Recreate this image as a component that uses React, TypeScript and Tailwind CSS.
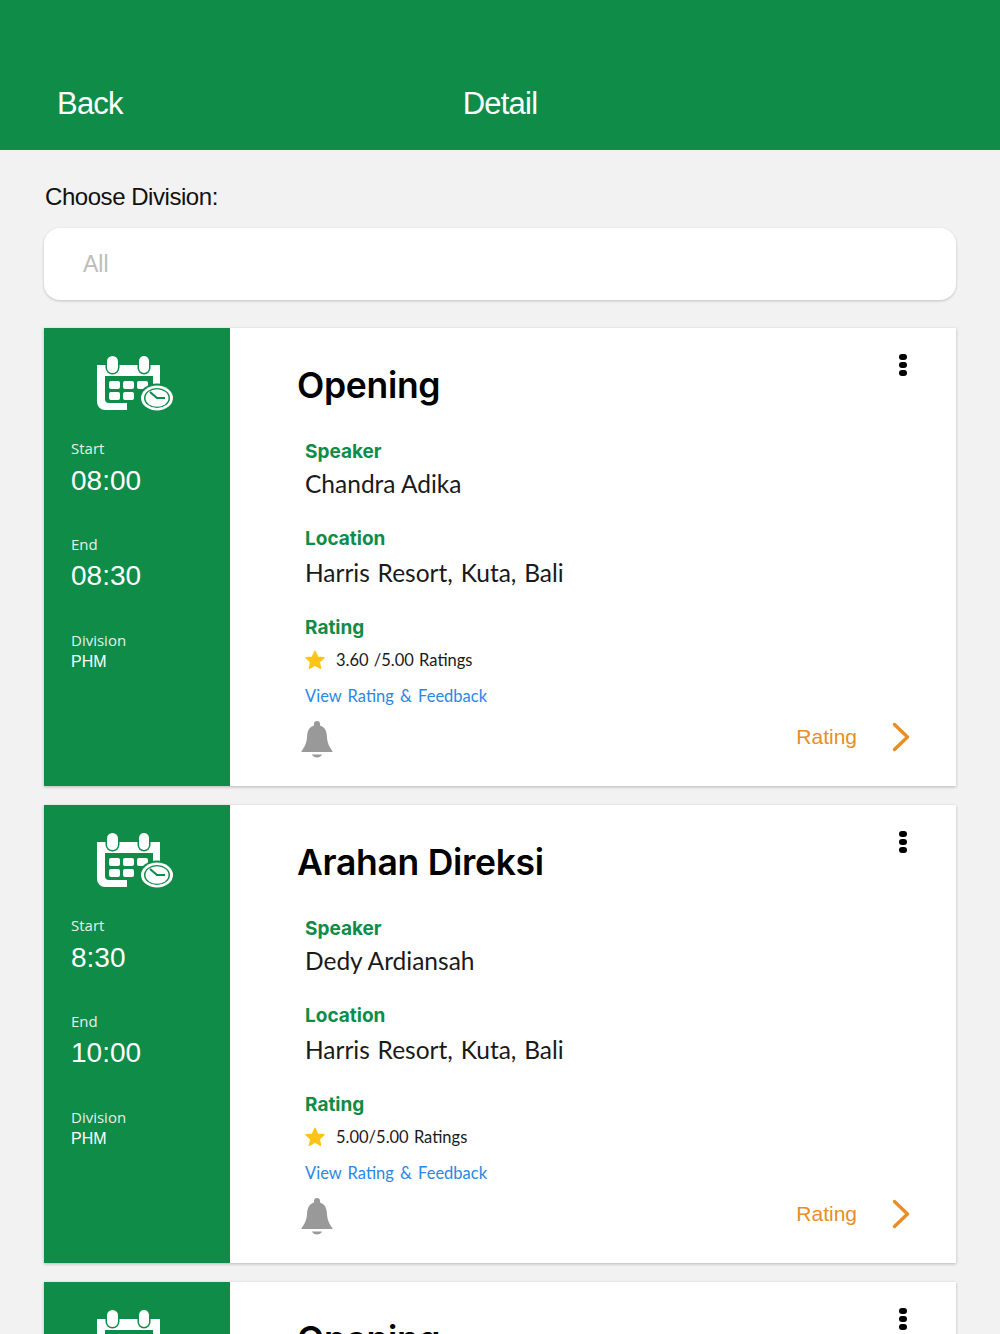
const sessions = [
  { title: "Opening", start: "08:00", end: "08:30", speaker: "Chandra Adika", rating: "3.60 /5.00" },
  { title: "Arahan Direksi", start: "8:30", end: "10:00", speaker: "Dedy Ardiansah", rating: "5.00/5.00" },
  { title: "Opening", start: "08:00", end: "08:30", speaker: "Chandra Adika", rating: "3.60 /5.00" },
];

const GREEN = "#0e8c48";

function CalendarIcon() {
  return (
    <svg width="78" height="56" viewBox="0 0 78 56" className="block">
      <path fill="#fff" d="M0 9h63v38H30v7H8a8 8 0 0 1-8-8z" />
      <path fill={GREEN} d="M8 20h48v27H12a4 4 0 0 1-4-4z" />
      <rect x="8.500" y="-2" width="14" height="20.500" rx="7" fill={GREEN} />
      <rect x="40.500" y="-2" width="13" height="20.500" rx="6.500" fill={GREEN} />
      <rect x="10" y="0" width="11" height="17" rx="5.500" fill="#fff" />
      <rect x="42" y="0" width="10" height="17" rx="5" fill="#fff" />
      <rect x="12" y="25" width="11" height="8" rx="2" fill="#fff" />
      <rect x="26" y="25" width="11" height="8" rx="2" fill="#fff" />
      <rect x="40" y="25" width="11" height="8" rx="2" fill="#fff" />
      <rect x="12" y="36" width="11" height="8" rx="2" fill="#fff" />
      <rect x="26" y="36" width="11" height="8" rx="2" fill="#fff" />
      <ellipse cx="60" cy="42" rx="18" ry="14.500" fill={GREEN} />
      <ellipse cx="60" cy="42" rx="16" ry="12.500" fill="#fff" />
      <ellipse cx="60" cy="42" rx="13" ry="10" fill={GREEN} />
      <ellipse cx="60" cy="42" rx="11.500" ry="8.700" fill="#fff" />
      <path d="M53 36l7 6h8" fill="none" stroke={GREEN} strokeWidth="2.200" />
    </svg>
  );
}

function Star() {
  return (
    <svg width="22" height="22" viewBox="0 0 24 24" className="block">
      <path
        fill="#fcc419"
        stroke="#fcc419"
        strokeWidth="1.5"
        strokeLinejoin="round"
        d="M12 2.500l2.900 6.300 6.900.8-5.100 4.700 1.400 6.800-6.100-3.400-6.100 3.400 1.400-6.800-5.100-4.700 6.900-.8z"
      />
    </svg>
  );
}

function Bell() {
  return (
    <svg width="32" height="38" viewBox="0 0 32 38" className="block">
      <path
        fill="#999"
        d="M13 4a3 3 0 0 1 6 0v1.600c4.600 1.400 6.600 5.400 6.900 10.400.4 7 2.200 10.500 5.600 15.200.3.500 0 .8-.5.8H1c-.5 0-.8-.3-.5-.8C3.900 26.500 5.700 23 6.100 16c.3-5 2.300-9 6.900-10.400z"
      />
      <path fill="#999" d="M11 34.500h10c-.8 2-2.800 3-5 3s-4.200-1-5-3z" />
    </svg>
  );
}

function Card({ s }: { s: (typeof sessions)[number] }) {
  return (
    <div className="flex h-[458px] shrink-0 bg-white shadow-[0_1px_3px_rgba(0,0,0,0.25)]">
      <div className="flex w-[186px] shrink-0 flex-col bg-[#0e8c48] pl-[27px] pt-[28px] text-white">
        <div className="ml-[26px]">
          <CalendarIcon />
        </div>
        <div className="mt-[27px] text-[15px] leading-[18px] font-['Open_Sans',sans-serif] text-[#e4f2ea]">Start</div>
        <div className="mt-[7px] text-[28px] leading-[34px] font-['Liberation_Sans',sans-serif]">{s.start}</div>
        <div className="mt-[37px] text-[15px] leading-[18px] font-['Open_Sans',sans-serif] text-[#e4f2ea]">End</div>
        <div className="mt-[6px] text-[28px] leading-[34px] font-['Liberation_Sans',sans-serif]">{s.end}</div>
        <div className="mt-[38px] text-[15px] leading-[18px] font-['Open_Sans',sans-serif] text-[#e4f2ea]">Division</div>
        <div className="mt-[3px] text-[16px] leading-[20px] font-['Liberation_Sans',sans-serif]">PHM</div>
      </div>

      <div className="flex min-w-0 flex-1 flex-col pl-[68px] pr-[46px]">
        <div className="flex items-start justify-between pt-[36px]">
          <h2 className="-ml-[1px] text-[35.5px] leading-[44px] font-semibold text-black font-['Inter',sans-serif] tracking-[-0.3px]">
            {s.title}
          </h2>
          <div className="-mt-[10px] mr-[3px] flex flex-col gap-[2px]">
            <span className="h-[6px] w-[8px] rounded-full bg-black" />
            <span className="h-[6px] w-[8px] rounded-full bg-black" />
            <span className="h-[6px] w-[8px] rounded-full bg-black" />
          </div>
        </div>

        <div className="pl-[7px]">
          <div className="mt-[32px] text-[19px] leading-[24px] font-bold text-[#0e8c48] font-['Inter',sans-serif]">Speaker</div>
          <div className="mt-[4px] text-[24.5px] leading-[32px] text-[#1a1a1a] font-['Lato',sans-serif]">{s.speaker}</div>
          <div className="mt-[27px] text-[19px] leading-[24px] font-bold text-[#0e8c48] font-['Inter',sans-serif]">Location</div>
          <div className="mt-[6px] text-[24.5px] leading-[32px] text-[#1a1a1a] font-['Lato',sans-serif] [word-spacing:1.5px]">Harris Resort, Kuta, Bali</div>
          <div className="mt-[27px] text-[19px] leading-[24px] font-bold text-[#0e8c48] font-['Inter',sans-serif]">Rating</div>
          <div className="mt-[8px] flex h-[24px] items-center gap-[10px] -ml-[1px] text-[16.5px] text-[#1a1a1a] font-['Lato',sans-serif]">
            <Star />
            <span className="[word-spacing:1px]">{s.rating} Ratings</span>
          </div>
          <div className="mt-[12px] text-[16.5px] leading-[24px] text-[#2b87e3] font-['Lato',sans-serif] [word-spacing:2px]">View Rating &amp; Feedback</div>
        </div>

        <div className="mt-[12px] flex items-center justify-between pl-[3px]">
          <Bell />
          <div className="flex items-center gap-[35px] -mt-[4px]">
            <span className="text-[21px] leading-[28px] text-[#e98e24] font-['Liberation_Sans',sans-serif]">Rating</span>
            <svg width="18" height="30" viewBox="0 0 18 30" className="block">
              <path d="M2.500 2.500L15.500 15 2.500 27.500" fill="none" stroke="#e98e24" strokeWidth="3.400" strokeLinecap="round" strokeLinejoin="round" />
            </svg>
          </div>
        </div>
      </div>
    </div>
  );
}

export default function App() {
  return (
    <div className="flex h-[1334px] flex-col overflow-hidden bg-[#f2f2f2] font-['Liberation_Sans',sans-serif]">
      <header className="flex h-[150px] shrink-0 items-end bg-[#0e8c48] pb-[26px] text-white">
        <div className="relative flex w-full justify-center">
          <span className="absolute left-[57px] text-[31px] leading-[40px] tracking-[-0.8px]">Back</span>
          <span className="text-[31px] leading-[40px] tracking-[-0.8px]">Detail</span>
        </div>
      </header>

      <main className="flex flex-col px-[44px]">
        <div className="mt-[32px] pl-[1px] text-[24px] leading-[30px] tracking-[-0.45px] text-[#111]">Choose Division:</div>
        <div className="mt-[16px] flex h-[72px] items-center rounded-[16px] bg-white pl-[39px] text-[23px] text-[#bdbdbd] shadow-[0_1px_3px_rgba(0,0,0,0.2)]">
          All
        </div>
        <div className="mt-[28px] flex flex-col gap-[19px]">
          {sessions.map((s, i) => (
            <Card key={i} s={s} />
          ))}
        </div>
      </main>
    </div>
  );
}
